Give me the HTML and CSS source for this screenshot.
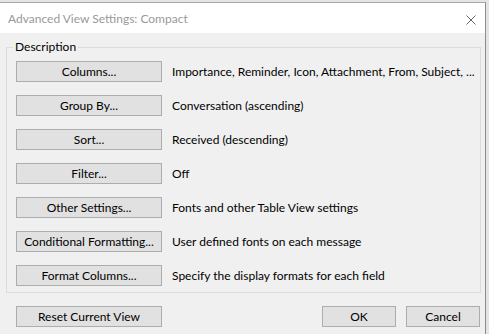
FILE: index.html
```html
<!DOCTYPE html>
<html>
<head>
<meta charset="utf-8">
<link rel="stylesheet" href="styles.css">
</head>
<body>
<div class="desktop">
  <div class="dialog">
    <div class="titlebar">
      <span class="title">Advanced View Settings: Compact</span>
      <svg class="close" width="10" height="10" viewBox="0 0 10 10"><path d="M0.5 0.5 L9.5 9.5 M9.5 0.5 L0.5 9.5" stroke="#666" stroke-width="1" fill="none"/></svg>
    </div>
    <div class="content">
      <fieldset class="group">
        <legend>Description</legend>
        <div class="row"><button class="btn wide">Columns...</button><span class="desc">Importance, Reminder, Icon, Attachment, From, Subject, ...</span></div>
        <div class="row"><button class="btn wide">Group By...</button><span class="desc">Conversation (ascending)</span></div>
        <div class="row"><button class="btn wide">Sort...</button><span class="desc">Received (descending)</span></div>
        <div class="row"><button class="btn wide">Filter...</button><span class="desc">Off</span></div>
        <div class="row"><button class="btn wide">Other Settings...</button><span class="desc">Fonts and other Table View settings</span></div>
        <div class="row"><button class="btn wide">Conditional Formatting...</button><span class="desc">User defined fonts on each message</span></div>
        <div class="row"><button class="btn wide">Format Columns...</button><span class="desc">Specify the display formats for each field</span></div>
      </fieldset>
      <div class="footer">
        <button class="btn wide reset">Reset Current View</button>
        <div class="spacer"></div>
        <button class="btn small">OK</button>
        <button class="btn small">Cancel</button>
      </div>
    </div>
  </div>
</div>
</body>
</html>
```
FILE: styles.css
```css
html, body {
  margin: 0;
  padding: 0;
}
body {
  width: 489px;
  height: 334px;
  overflow: hidden;
  background: #e4e4e4;
  font-family: "Lato", "Noto Sans", sans-serif;
  font-size: 12px;
  color: #000;
}
.desktop {
  padding-top: 2px;
  height: 332px;
}
.dialog {
  width: 486px;
  height: 332px;
  background: #f0f0f0;
  border-top: 1px solid #a8a8a8;
  border-right: 1px solid #8c8c8c;
  box-sizing: border-box;
  display: flex;
  flex-direction: column;
}
.titlebar {
  height: 30px;
  background: #fff;
  display: flex;
  align-items: center;
  padding-left: 8px;
  padding-right: 9px;
  flex: none;
}
.title {
  color: #999;
  font-size: 12px;
  flex: 1;
  margin-top: 1px;
}
.close {
  display: block;
  margin-top: 4px;
}
.content {
  padding: 7px 5px 0 6px;
}
.group {
  margin: 0;
  border: 1px solid #dcdcdc;
  padding: 0 0 6px 9px;
  width: 475px;
  box-sizing: border-box;
  display: flex;
  flex-direction: column;
  gap: 13px;
}
.group legend {
  padding: 0 2px;
  margin-left: -3px;
  line-height: 14px;
  height: 14px;
  margin-bottom: 7px;
}
.row {
  display: flex;
  align-items: center;
  height: 21px;
}
.btn {
  font-family: inherit;
  font-size: 12px;
  color: #000;
  background: #e1e1e1;
  border: 1px solid #adadad;
  height: 21px;
  padding: 0;
  margin: 0;
  box-sizing: border-box;
  line-height: 19px;
}
.wide {
  width: 146px;
}
.small {
  width: 74px;
}
.desc {
  margin-left: 10px;
  white-space: nowrap;
}
.footer {
  display: flex;
  margin-top: 13px;
  gap: 10px;
  padding-left: 10px;
}
.spacer {
  flex: 1;
}
```
